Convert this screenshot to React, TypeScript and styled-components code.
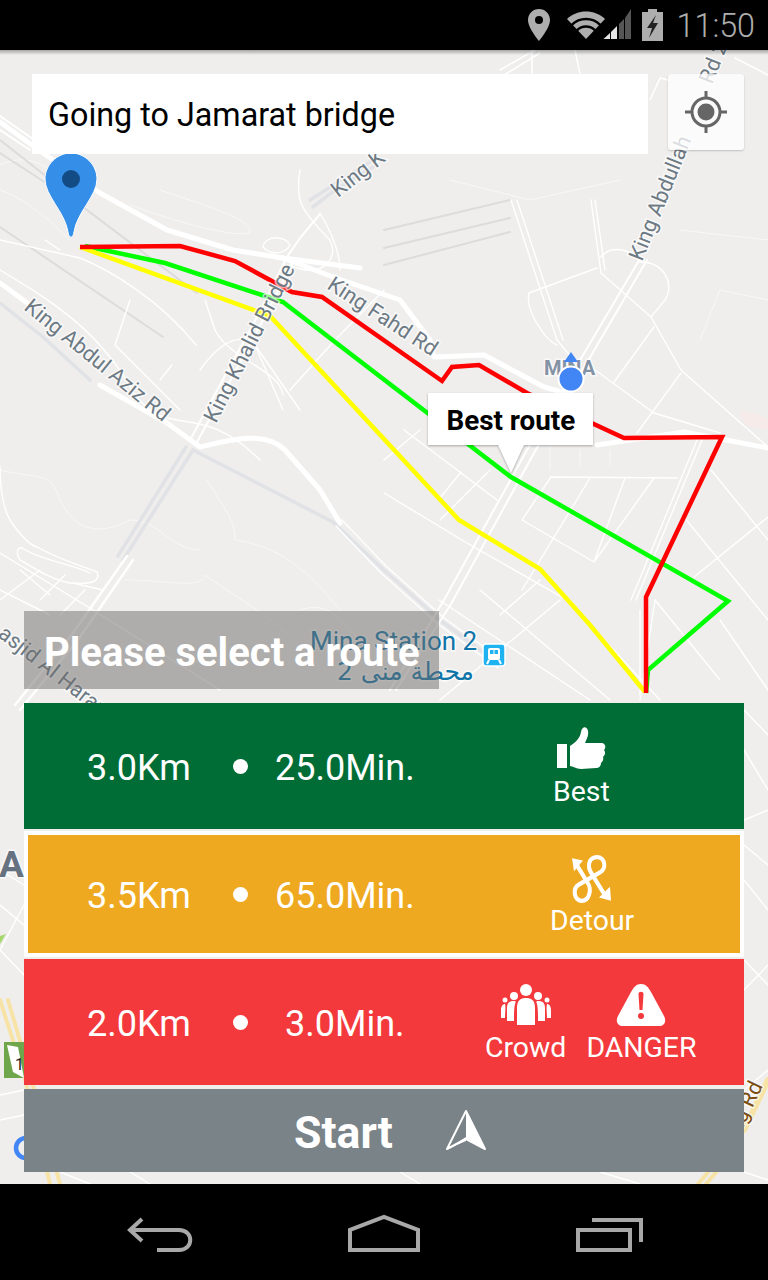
import React from 'react';
import styled, { createGlobalStyle } from 'styled-components';

const Global = createGlobalStyle`
  html, body { margin: 0; padding: 0; background: #000; }
  #root { width: 768px; height: 1280px; }
`;

const Screen = styled.div`
  width: 768px;
  height: 1280px;
  display: flex;
  flex-direction: column;
  font-family: Roboto, "Noto Sans", sans-serif;
  overflow: hidden;
  background: #000;
`;

const StatusBar = styled.header`
  height: 50px;
  flex: none;
  display: flex;
  align-items: center;
  justify-content: flex-end;
  padding-right: 13px;
  background: #000;
  color: #aeaeae;
`;

const StatusIcon = styled.svg<{ $gap?: number }>`
  display: block;
  margin-right: ${p => p.$gap ?? 0}px;
`;

const Clock = styled.span`
  font-size: 32.3px;
  font-weight: 300;
  line-height: 50px;
  padding-top: 2px;
`;

const MapArea = styled.main`
  position: relative;
  flex: 1;
  background: #efeeed;
  overflow: hidden;
`;

const MapDrawing = styled.svg`
  position: absolute;
  inset: 0;
  width: 768px;
  height: 1134px;
`;

const TopShade = styled.div`
  position: absolute;
  top: 0;
  left: 0;
  right: 0;
  height: 5px;
  background: linear-gradient(rgba(0, 0, 0, 0.3), rgba(0, 0, 0, 0));
`;

const Overlay = styled.div`
  position: absolute;
  inset: 0;
  display: flex;
  flex-direction: column;
`;

const TopRow = styled.div`
  display: flex;
  align-items: flex-start;
  gap: 20px;
  padding: 24px 24px 0 32px;
`;

const SearchBox = styled.div`
  width: 616px;
  height: 80px;
  box-sizing: border-box;
  padding: 2px 16px 0;
  display: flex;
  align-items: center;
  background: #fff;
  color: #000;
  font-size: 32.3px;
`;

const LocateButton = styled.div`
  width: 76px;
  height: 76px;
  display: flex;
  align-items: center;
  justify-content: center;
  background: rgba(255, 255, 255, 0.75);
  border-radius: 3px;
  box-shadow: 0 1px 2px rgba(0, 0, 0, 0.2);
`;

const BottomPanel = styled.section`
  margin-top: auto;
  padding: 0 24px 12px;
  display: flex;
  flex-direction: column;
`;

const PromptBar = styled.div`
  width: 415px;
  height: 78px;
  margin-bottom: 14px;
  box-sizing: border-box;
  padding: 4px 0 0 20px;
  display: flex;
  align-items: center;
  background: rgba(110, 108, 106, 0.5);
  color: #fff;
  font-size: 40px;
  font-weight: 700;
  white-space: nowrap;
`;

const RouteRow = styled.div<{ $bg: string; $framed?: boolean }>`
  height: ${p => (p.$framed ? 118 : 126)}px;
  display: flex;
  align-items: center;
  color: #fff;
  background: ${p => p.$bg};
  border: ${p => (p.$framed ? '4px solid #fff' : 'none')};
  margin-bottom: ${p => (p.$framed ? 2 : 0)}px;
  margin-top: ${p => (p.$framed ? 2 : 0)}px;
`;

const Stats = styled.div<{ $inset: number }>`
  width: ${p => 456 - p.$inset}px;
  flex: none;
  display: flex;
  align-items: center;
  box-sizing: border-box;
  padding: 4px 0 0 ${p => 63 - p.$inset}px;
  font-size: 36px;
`;

const Distance = styled.span`
  width: 146px;
`;

const Dot = styled.span`
  width: 15px;
  height: 15px;
  border-radius: 50%;
  background: #fff;
  margin: -4px 27px 0 0;
`;

const Duration = styled.span<{ $pad?: number }>`
  padding-left: ${p => p.$pad ?? 0}px;
  white-space: nowrap;
`;

const Badges = styled.div<{ $left: number; $top?: number }>`
  display: flex;
  gap: 20px;
  padding-left: ${p => p.$left}px;
  padding-top: ${p => p.$top ?? 2}px;
`;

const Badge = styled.div`
  display: flex;
  flex-direction: column;
  align-items: center;
  font-size: 28.4px;
  line-height: 32px;
`;

const BadgeIcon = styled.svg<{ $gap?: number }>`
  display: block;
  margin-bottom: ${p => p.$gap ?? 6}px;
`;

const StartRow = styled.div`
  height: 83px;
  box-sizing: border-box;
  margin-top: 4px;
  padding: 4px 0 0 13px;
  display: flex;
  align-items: center;
  justify-content: center;
  gap: 52px;
  background: #7a8388;
  color: #fff;
  font-size: 44.6px;
  font-weight: 700;
`;

const StartArrow = styled.svg`
  display: block;
  margin-top: -4px;
`;

const NavBar = styled.nav`
  height: 96px;
  flex: none;
  background: #000;
`;

const NavIcons = styled.svg`
  display: block;
`;

const roadLabel = {
  fontFamily: 'Roboto, sans-serif',
  fontSize: 21.5,
  fill: '#6d7a84',
  stroke: 'rgba(255,255,255,0.65)',
  strokeWidth: 3,
  paintOrder: 'stroke',
} as const;

type L = { t: string; x: number; y: number; r: number };
const labels: L[] = [
  { t: 'King Abdul Aziz Rd', x: 23, y: 309, r: 39 },
  { t: 'King Khalid Bridge', x: 216, y: 424, r: -63 },
  { t: 'King Fahd Rd', x: 326, y: 288, r: 33 },
  { t: 'King K', x: 338, y: 198, r: -38 },
  { t: 'King Abdullah', x: 642, y: 262, r: -68 },
  { t: 'Rd 2', x: 712, y: 85, r: -68 },
  { t: 'asjid Al Haram', x: -3, y: 636, r: 38 },
];

const faint = [
  'M0 165 C30 150 60 170 60 190 M0 190 C30 200 60 230 70 240',
  'M160 190 C220 210 250 220 250 232 C240 240 170 220 130 205',
  'M207 480 C225 510 235 520 235 540 C270 545 300 560 340 610',
  'M0 470 C40 480 50 470 60 500 C80 540 110 530 130 520 C160 520 170 550 200 550',
  'M125 580 C170 580 200 590 205 575 C240 600 280 620 310 660',
  'M300 610 C330 600 340 620 360 640',
  'M530 200 L620 180 M450 180 L530 200 M500 110 L520 150',
  'M680 230 L768 240 M720 290 L768 300 M700 340 L720 290',
  'M550 470 L550 440 M580 465 L580 450 M610 465 L610 450',
];

const thin = [
  'M0 240 L80 258 M80 258 C110 270 160 300 196 345 M60 250 L45 240',
  'M0 270 C50 300 100 330 135 395 C170 440 200 400 260 460',
  'M160 380 L172 365 M130 300 L115 345 L180 410',
  'M205 300 L215 330 C230 360 280 370 283 395 M290 390 L335 340 L384 290',
  'M200 370 C225 335 245 335 255 345 L283 410 M255 345 L300 410',
  'M300 170 C295 200 300 210 330 240 C340 260 320 280 290 265',
  'M263 247 C265 235 285 235 290 245 C285 255 270 255 263 247',
  'M320 213 C330 230 340 250 340 270',
  'M511 200 L557 340 L571 357 M517 200 L563 340',
  'M591 200 L601 273 L651 317 L681 370 L734 417 L768 447 M595 200 L605 270',
  'M601 257 C610 245 630 248 640 262 C665 262 675 285 665 300 L651 317',
  'M529 293 L597 268 M529 293 C525 310 545 340 557 345',
  'M591 367 L654 413 L720 433 M614 382 L654 327 M637 433 L681 373',
  'M551 477 L677 478 M551 477 L522 520 L594 562 L654 478 M590 478 L522 590 M625 478 L594 562',
  'M697 440 L631 600 M702 440 L636 600',
  'M711 470 L768 540 M684 517 L768 620 M694 577 L768 517 M655 600 L720 680 M720 620 L768 690',
  'M404 430 L497 500 M461 472 L440 498 M384 493 L467 543 L567 600 L660 700',
  'M384 460 L420 430 M440 520 L490 470',
  'M0 467 C0 490 4 510 10 520 C20 535 30 545 37 547 C60 560 80 565 97 572 C100 580 95 585 70 583 C50 580 30 565 20 560 C15 552 18 547 22 548 C40 560 75 565 90 573',
  'M73 583 L103 590 M0 553 L93 610 L220 690 M0 590 L50 615 M0 600 L40 570',
  'M40 600 L65 575 M60 615 L85 590 M20 570 L50 595',
  'M439 600 L590 700 M480 590 L610 700 M560 600 L440 700',
  'M500 615 L540 580 M640 610 L640 695 M655 600 L640 700',
  'M0 905 L24 925 M0 950 L24 905 M0 950 L24 975 M0 870 L24 885',
  'M0 1095 L24 1090 M0 1120 L24 1115',
  'M744 880 L768 910 M744 960 L768 985 M744 990 L768 965 M744 1090 L768 1070 M744 1172 L768 1180',
  'M744 710 L768 735 M744 750 L768 790 M744 820 L768 810 M744 845 L768 865',
  'M60 1172 L90 1184 M130 1172 L150 1184 M400 1172 L420 1184 M600 1172 L640 1184',
  'M342 520 L386 566 L444 618 L505 662 M336 526 L380 572 L438 624 L498 668',
];

const thick = [
  'M0 122 L43 153 L100 193 L167 230 L233 250 L283 258 L333 277',
  'M0 283 L30 305 M100 385 L167 423 L200 447 C230 440 265 430 285 450 L320 490 L340 523',
  'M333 277 L400 300 L430 340 L434 357 L484 355 L544 387 L591 400',
  'M597 445 L684 432 L768 448',
  'M283 258 L360 268',
];

const rails = [
  'M0 153 L83 207 L197 293',
  'M0 227 L163 337',
  'M0 140 L70 195',
  'M384 230 L510 200',
  'M384 265 L510 232',
  'M384 248 L510 218',
];

const pale = [
  'M0 303 L43 337 L90 380',
  'M193 450 L333 522 L384 570 L440 620 L500 665',
  'M193 450 L123 560',
  'M186 447 L118 556',
  'M373 167 L335 190 L313 207',
  'M370 162 L332 186 L310 200',
];

function MapPicture() {
  return (
    <MapDrawing viewBox="0 50 768 1134">
      <path d="M740 410 L768 418 L768 430 L745 425 Z" fill="#f6ebe9" />
      <g fill="none" strokeLinecap="round" strokeLinejoin="round">
        {faint.map(d => <path key={d} d={d} stroke="#f8f8f8" strokeWidth="1" />)}
        {rails.map(d => <path key={d} d={d} stroke="#dcdcdc" strokeWidth="2" />)}
        {pale.map(d => <path key={d} d={d} stroke="#e0e2e5" strokeWidth="3.500" />)}
        {thin.map(d => <path key={d} d={d} stroke="#fff" strokeWidth="1.400" />)}
        {thick.map(d => <path key={d} d={d} stroke="#fff" strokeWidth="5" />)}
        <path d="M0 116 L43 146 M0 130 L30 150" stroke="#fff" strokeWidth="2" />
        <path d="M133 560 L80 637 L20 710 M127 556 L73 633 L15 705" stroke="#fff" strokeWidth="2.500" />
        <path d="M190 440 L257 317 L287 257 L300 238 L320 214 M196 444 L263 320 L294 260" stroke="#fff" strokeWidth="2" />
        <path d="M444 600 L527 450 L641 257 M451 604 L534 453 L647 260 M444 600 L390 690 M451 604 L396 690" stroke="#fff" strokeWidth="2" />
        <path d="M500 70 L535 50 M504 75 L540 53 M532 50 V74 M575 50 L580 74 M650 100 L660 78 L668 80 M735 58 L768 75" stroke="#fff" strokeWidth="1.500" />
        <path d="M0 1000 L24 1075 L50 1184 M8 1000 L30 1075 L60 1184" stroke="#f8e3a6" strokeWidth="4" />
        <path d="M698 1184 L710 1170 M706 1184 L718 1170" stroke="#f8e3a6" strokeWidth="4" />
        <path d="M744 1130 L768 1080" stroke="#f8e3a6" strokeWidth="6" />
      </g>

      <text x="-1" y="877" style={{ ...roadLabel, fontWeight: 700, fontSize: 37, fill: '#66727f' }}>A</text>
      <text x="740" y="1135" transform="rotate(-65 740 1135)" style={{ ...roadLabel, fill: '#7a4e12' }}>ng Rd</text>
      <text x="310" y="650" style={{ ...roadLabel, fontSize: 26, fill: '#0f75a8' }}>Mina Station 2</text>
      <text x="474" y="680" textAnchor="start" direction="rtl" style={{ ...roadLabel, fontFamily: '"DejaVu Sans", sans-serif', fontSize: 25, fill: '#0f75a8' }}>محطة منى 2</text>
      <rect x="483" y="644" width="22" height="22" rx="3" fill="#1eb2f1" stroke="#fff" strokeWidth="1.500" />
      <rect x="488" y="648" width="12" height="12" rx="2" fill="#fff" />
      <rect x="490" y="650" width="3.500" height="4" fill="#1eb2f1" />
      <rect x="494.500" y="650" width="3.500" height="4" fill="#1eb2f1" />
      <path d="M489 660 L487 664 M499 660 L501 664" stroke="#fff" strokeWidth="2" />

      <rect x="4" y="1042" width="20" height="36" fill="#6fa64c" />
      <path d="M7 1045 L18 1047 L24 1078 L13 1072 Z" fill="#fff" />
      <text x="15" y="1070" style={{ fontFamily: 'Roboto, sans-serif', fontSize: 16, fill: '#222' }}>1</text>
      <circle cx="26" cy="1148" r="10" fill="none" stroke="#4285f4" strokeWidth="4.500" />
      <path d="M0 936 L6 934 L0 944 Z" fill="#a6d86a" />

      <g fill="none" strokeWidth="4.500" strokeLinejoin="miter">
        <polyline stroke="#00ff00" points="85,246 165,263 283,302 511,477 728,601 648,670 646,693" />
        <polyline stroke="#ffff00" points="80,247 270,316 459,520 540,569 590,625 645,692" />
        <polyline stroke="#ff0000" points="80,247 180,246 235,261 292,292 322,297 442,381 452,367 479,365 527,393 624,438 722,437 646,597 646,693" />
      </g>

      {labels.map(l => (
        <text key={l.t} x={l.x} y={l.y} transform={`rotate(${l.r} ${l.x} ${l.y})`} style={roadLabel}>{l.t}</text>
      ))}

      <text x="544" y="375" style={{ ...roadLabel, fontWeight: 700, fontSize: 20, fill: '#8492a6' }}>MINA</text>
      <path d="M571 352 L578 362 L564 362 Z" fill="#4285f4" />
      <circle cx="571" cy="379" r="12.500" fill="#4285f4" stroke="#fff" strokeWidth="2" />

      <path d="M71 153 C57 153 45 165 45 179 C45 196 65 212 68 232 C69 239 73 239 74 232 C77 212 97 196 97 179 C97 165 85 153 71 153 Z" fill="#358fe8" stroke="#fff" strokeWidth="1" />
      <circle cx="71" cy="179" r="9" fill="#134b85" />

      <g style={{ filter: 'drop-shadow(0 1px 1px rgba(0,0,0,.3))' }}>
        <path d="M428 393 H593 V445 H524 L511 473 L498 445 H428 Z" fill="#fff" />
      </g>
      <text x="446.500" y="430" style={{ fontFamily: 'Roboto, sans-serif', fontWeight: 700, fontSize: 27.800, fill: '#000' }}>Best route</text>
    </MapDrawing>
  );
}

export default function App() {
  return (
    <Screen>
      <Global />
      <StatusBar>
        <StatusIcon width="22" height="32" viewBox="0 0 22 32" $gap={17} fill="currentColor">
          <path fillRule="evenodd" d="M11 0C4.900 0 0 4.900 0 11c0 8 11 21 11 21s11-13 11-21C22 4.900 17 0 11 0zm0 7a4 4 0 1 1 0 8 4 4 0 0 1 0-8z" />
        </StatusIcon>
        <StatusIcon width="64" height="34" viewBox="0 0 64 34" $gap={11} fill="none">
          <path d="M19 31 L0 11 C10 1 28 1 38 11 Z" fill="currentColor" />
          <circle cx="19" cy="31" r="20" stroke="#000" strokeWidth="2.500" />
          <circle cx="19" cy="31" r="12.500" stroke="#000" strokeWidth="2.500" />
          <path d="M36.500 31 L43 25 V31 Z" fill="#e4e4e4" />
          <path d="M44 24 L50 18 V31 H44 Z" fill="#e4e4e4" />
          <path d="M52 16 L57 11 V31 H52 Z" fill="#565656" />
          <path d="M58 10 L64 1 V31 H58 Z" fill="#565656" />
        </StatusIcon>
        <StatusIcon width="21" height="32" viewBox="0 0 21 32" $gap={14}>
          <path d="M6 0H15V3H21V32H0V3H6Z" fill="currentColor" />
          <path d="M14 6 L5 19 H10 L7 29 L16 14 H11 Z" fill="#222" />
        </StatusIcon>
        <Clock>11:50</Clock>
      </StatusBar>

      <MapArea>
        <MapPicture />
        <TopShade />
        <Overlay>
          <TopRow>
            <SearchBox>Going to Jamarat bridge</SearchBox>
            <LocateButton>
              <svg width="44" height="44" viewBox="0 0 44 44" fill="none" stroke="#666">
                <circle cx="22" cy="22" r="14" strokeWidth="3" />
                <circle cx="22" cy="22" r="8.500" fill="#666" stroke="none" />
                <path d="M22 1V8M22 36V43M1 22H8M36 22H43" strokeWidth="3" />
              </svg>
            </LocateButton>
          </TopRow>

          <BottomPanel>
            <PromptBar>Please select a route</PromptBar>

            <RouteRow $bg="#006d37">
              <Stats $inset={0}>
                <Distance>3.0Km</Distance>
                <Dot />
                <Duration>25.0Min.</Duration>
              </Stats>
              <Badges $left={73}>
                <Badge>
                  <BadgeIcon width="50" height="44" viewBox="0 0 50 44" fill="#fff">
                    <rect x="1" y="18" width="10" height="24" />
                    <path d="M14 20 C20 16 24 12 25 6 C26 0 31 0 32 5 C33 10 30 14 29 17 L46 17 C50 18 50 22 48 24 C50 27 49 29 47 31 C48 34 46 36 45 37 C45 40 43 42 40 42 L25 43 C20 43 17 40 14 40 Z" />
                  </BadgeIcon>
                  Best
                </Badge>
              </Badges>
            </RouteRow>

            <RouteRow $bg="#eea920" $framed>
              <Stats $inset={4}>
                <Distance>3.5Km</Distance>
                <Dot />
                <Duration>65.0Min.</Duration>
              </Stats>
              <Badges $left={70} $top={4}>
                <Badge>
                  <BadgeIcon width="42" height="48" viewBox="0 1 42 44" preserveAspectRatio="none" $gap={2} fill="none">
                    <path d="M5 7 L17 25 C21 31 18 41 11 41 C3 41 1 30 8 26 L29 15 C36 11 34 1 26 1 C18 1 16 9 20 15 L34 36" stroke="#fff" strokeWidth="4" strokeLinecap="round" transform="translate(0 2)" />
                    <path d="M1 4 L12 6 L3 16 Z M40 43 L28 40 L39 30 Z" fill="#fff" />
                  </BadgeIcon>
                  Detour
                </Badge>
              </Badges>
            </RouteRow>

            <RouteRow $bg="#f3393b">
              <Stats $inset={0}>
                <Distance>2.0Km</Distance>
                <Dot />
                <Duration $pad={10}>3.0Min.</Duration>
              </Stats>
              <Badges $left={5} $top={4}>
                <Badge>
                  <BadgeIcon width="50" height="42" viewBox="0 0 50 42" fill="#fff">
                    <circle cx="25" cy="6" r="6" />
                    <path d="M16 24 C16 16 20 14 25 14 C30 14 34 16 34 24 V41 H16 Z" />
                    <circle cx="13" cy="12" r="4" />
                    <circle cx="37" cy="12" r="4" />
                    <path d="M6 24 C6 18 9 17 13 17 C15 17 15 18 14 20 C13 24 13 30 13 37 H6 Z M44 24 C44 18 41 17 37 17 C35 17 35 18 36 20 C37 24 37 30 37 37 H44 Z" />
                    <circle cx="4" cy="16" r="2.500" />
                    <circle cx="46" cy="16" r="2.500" />
                    <path d="M0 26 C0 22 2 20 4 20 C5 24 4 28 4 34 H0 Z M50 26 C50 22 48 20 46 20 C45 24 46 28 46 34 H50 Z" />
                  </BadgeIcon>
                  Crowd
                </Badge>
                <Badge>
                  <BadgeIcon width="50" height="42" viewBox="0 0 50 42">
                    <path d="M25 0 C20 0 18 3 15 8 L2 32 C-1 38 2 42 7 42 H43 C48 42 51 38 48 32 L35 8 C32 3 30 0 25 0 Z" fill="#fff" />
                    <path d="M22.500 10 C22.500 7 27.500 7 27.500 10 L26.500 26 H23.500 Z" fill="#f3393b" />
                    <circle cx="25" cy="32" r="3" fill="#f3393b" />
                  </BadgeIcon>
                  DANGER
                </Badge>
              </Badges>
            </RouteRow>

            <StartRow>
              <span>Start</span>
              <StartArrow width="42" height="44" viewBox="0 0 42 44">
                <path d="M21 2 L40 40 L21 30 L2 40 Z" fill="none" stroke="#fff" strokeWidth="2" strokeLinejoin="round" />
                <path d="M21 2 L40 40 L21 29 Z M21 28 L2 40 L21 32 Z" fill="#fff" />
              </StartArrow>
            </StartRow>
          </BottomPanel>
        </Overlay>
      </MapArea>

      <NavBar>
        <NavIcons width="768" height="96" viewBox="0 1184 768 96" fill="none" stroke="#a8a8a8" strokeWidth="4">
          <path d="M142 1219 L130 1230 L142 1241 M130 1230 H179 C194 1230 194 1250 179 1250 H157" />
          <path d="M350 1250 V1230 L384 1217 L418 1230 V1250 Z" />
          <path d="M578 1230 H630 V1250 H578 Z M592 1220 H641 V1242" />
        </NavIcons>
      </NavBar>
    </Screen>
  );
}
